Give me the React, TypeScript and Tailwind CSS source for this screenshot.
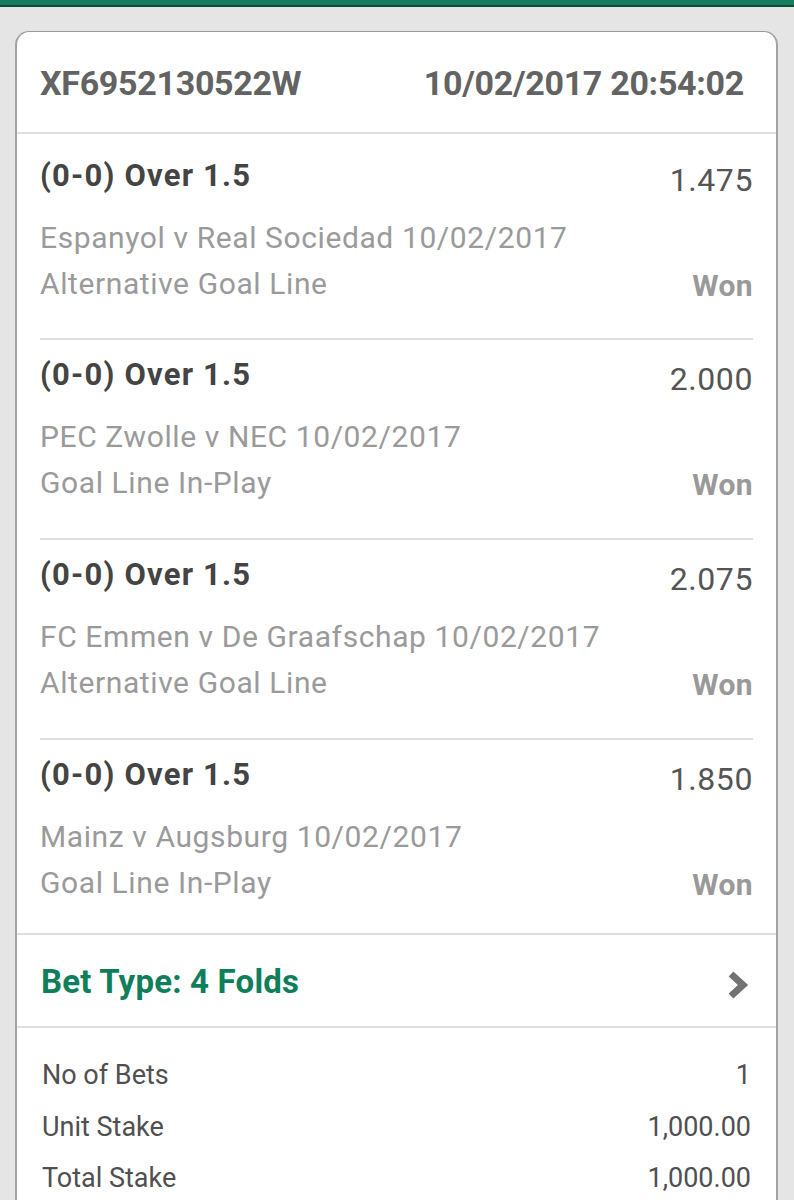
const legs = [
  { sel: '(0-0) Over 1.5', odds: '1.475', event: 'Espanyol v Real Sociedad 10/02/2017', market: 'Alternative Goal Line' },
  { sel: '(0-0) Over 1.5', odds: '2.000', event: 'PEC Zwolle v NEC 10/02/2017', market: 'Goal Line In-Play' },
  { sel: '(0-0) Over 1.5', odds: '2.075', event: 'FC Emmen v De Graafschap 10/02/2017', market: 'Alternative Goal Line' },
  { sel: '(0-0) Over 1.5', odds: '1.850', event: 'Mainz v Augsburg 10/02/2017', market: 'Goal Line In-Play' },
];

const totals = [
  ['No of Bets', '1'],
  ['Unit Stake', '1,000.00'],
  ['Total Stake', '1,000.00'],
];

// row heights differ a bit: first leg has more room under the header, last one sits on the bet type bar
const rowClass = [
  'h-[206px] pt-[26px] border-b-2 border-[#dedede]',
  'h-[200px] pt-[19px] border-b-2 border-[#dedede]',
  'h-[200px] pt-[19px] border-b-2 border-[#dedede]',
  'h-[193px] pt-[19px]',
];

export default function App() {
  return (
    <div className="w-[794px] h-[1200px] overflow-hidden bg-[#e5e5e5] font-['Roboto','Liberation_Sans',sans-serif]">
      <div className="h-[5px] bg-[#167e5e]" />
      <div className="h-[2px] bg-[#0c4d37]" />

      <div className="ml-[15px] mr-[16px] mt-[24px] bg-white rounded-t-[14px] border-t border-x-2 border-[#a3a3a3] border-t-[#9a9a9a]">
        {/* header */}
        <div className="h-[102px] flex justify-between items-start pt-[34px] pl-[23px] pr-[32px] border-b-2 border-[#dedede] text-[#636363] font-bold text-[34px] leading-none tracking-[-0.3px]">
          <span>XF6952130522W</span>
          <span>10/02/2017 20:54:02</span>
        </div>

        {/* legs */}
        <div className="px-[23px]">
          {legs.map((leg, i) => (
            <div key={i} className={rowClass[i]}>
              <div className="flex justify-between items-start">
                <span className="text-[#444] font-bold text-[31px] leading-none tracking-[1.2px]">{leg.sel}</span>
                <span className="text-[#555] text-[32px] leading-none tracking-[0.6px] mt-[4px]">{leg.odds}</span>
              </div>
              <div className="text-[#9a9a9a] text-[30px] leading-none tracking-[0.6px] mt-[27px]">{leg.event}</div>
              <div className="flex justify-between items-start mt-[16px]">
                <span className="text-[#9a9a9a] text-[30px] leading-none tracking-[0.6px]">{leg.market}</span>
                <span className="text-[#999] font-bold text-[30px] leading-none tracking-[0.4px] mt-[2px]">Won</span>
              </div>
            </div>
          ))}
        </div>

        {/* bet type */}
        <div className="h-[95px] border-y-2 border-[#dedede] flex items-start justify-between pt-[30px] pl-[24px] pr-[26px]">
          <span className="text-[#0f7e5b] font-bold text-[33px] leading-none tracking-[0.2px]">Bet Type: 4 Folds</span>
          <svg width="24" height="32" viewBox="0 0 24 32" className="mt-[4px]">
            <path d="M5 5 L17 16 L5 27" fill="none" stroke="#727272" strokeWidth="7" />
          </svg>
        </div>

        {/* totals */}
        <div className="pt-[34px] pl-[25px] pr-[25px] pb-[20px] flex flex-col gap-[24.5px]">
          {totals.map(([label, value]) => (
            <div key={label} className="flex justify-between text-[#505050] text-[27px] leading-none">
              <span>{label}</span>
              <span>{value}</span>
            </div>
          ))}
        </div>
      </div>
    </div>
  );
}
